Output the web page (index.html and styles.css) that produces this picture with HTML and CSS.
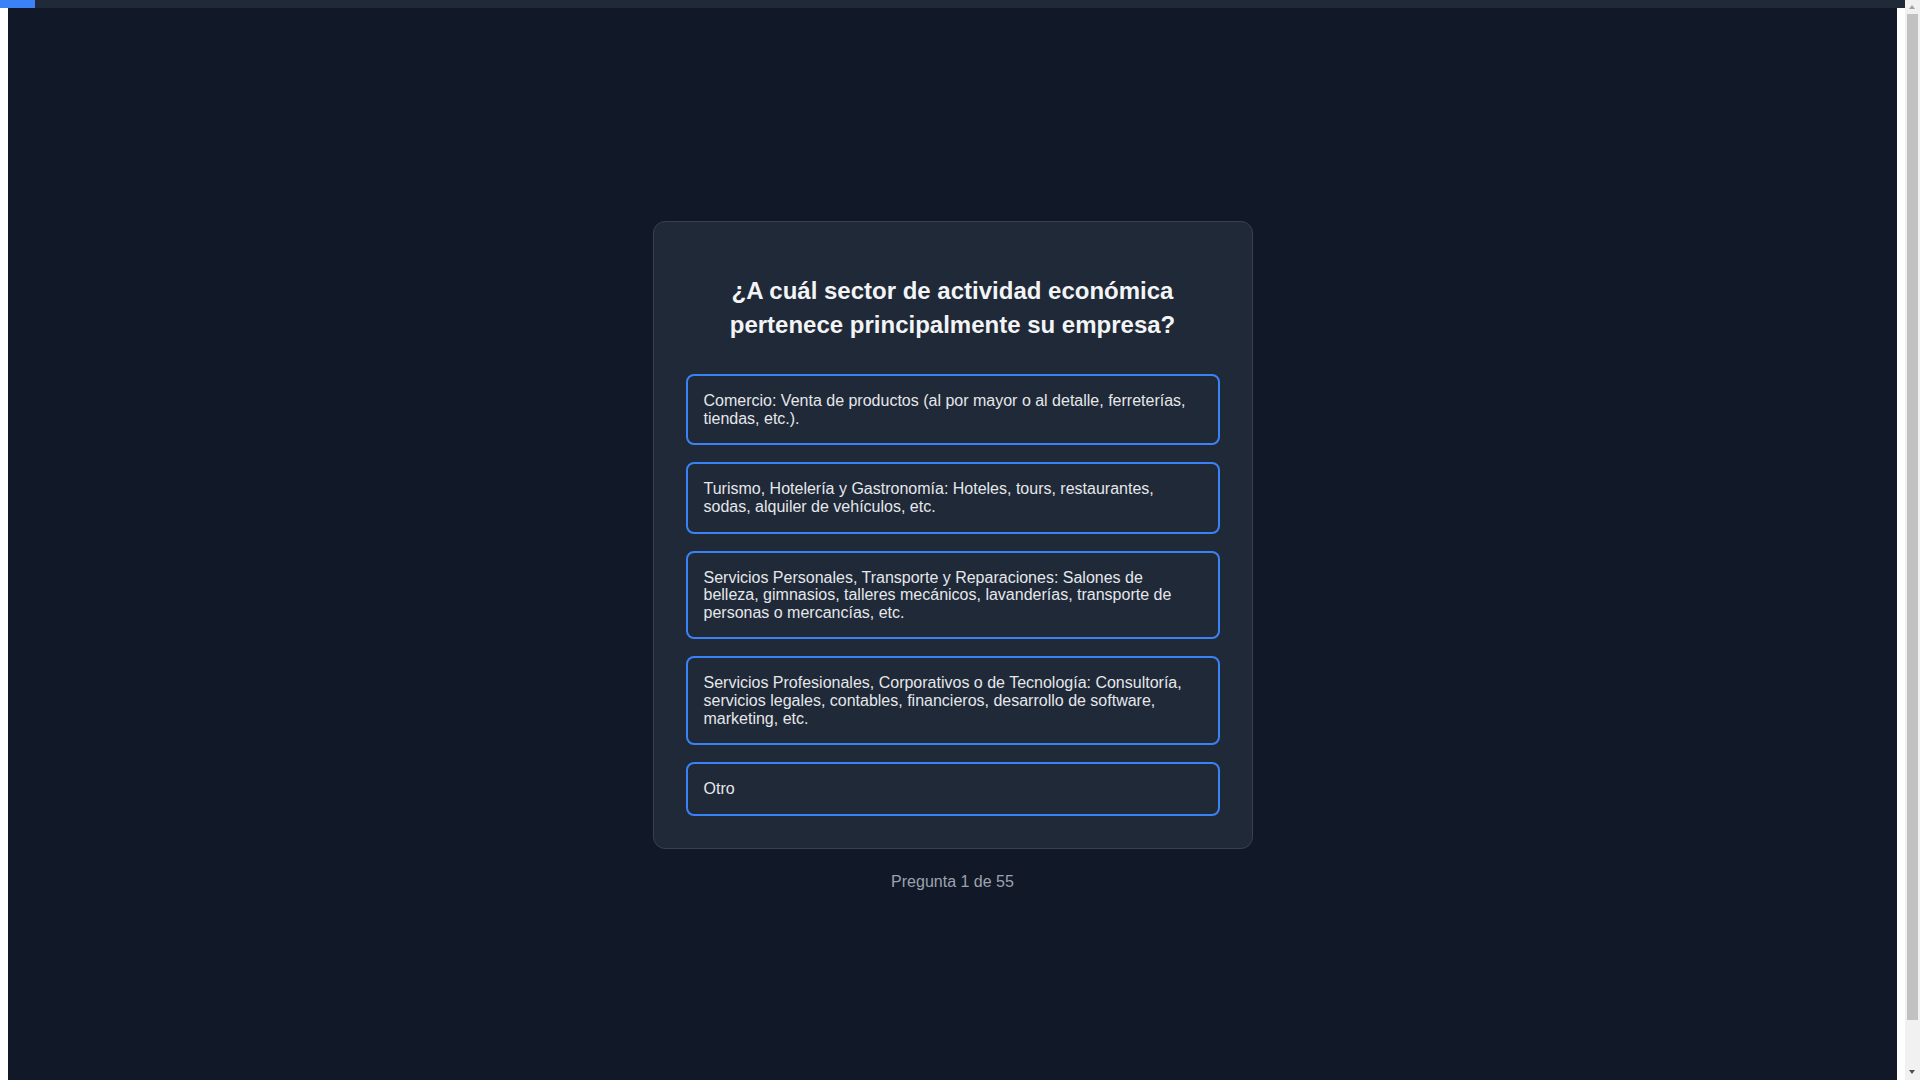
FILE: index.html
```html
<!DOCTYPE html>
<html lang="es">
<head>
<meta charset="utf-8">
<title>Encuesta</title>
<link rel="stylesheet" href="styles.css">
</head>
<body>
<div class="progress"><div class="progress-fill" style="width: 1.818%"></div></div>
<main class="page">
  <div class="quiz">
    <section class="card">
      <h2 class="question">¿A cuál sector de actividad económica pertenece principalmente su empresa?</h2>
      <div class="options">
        <button class="option">Comercio: Venta de productos (al por mayor o al detalle, ferreterías, tiendas, etc.).</button>
        <button class="option">Turismo, Hotelería y Gastronomía: Hoteles, tours, restaurantes, sodas, alquiler de vehículos, etc.</button>
        <button class="option">Servicios Personales, Transporte y Reparaciones: Salones de belleza, gimnasios, talleres mecánicos, lavanderías, transporte de personas o mercancías, etc.</button>
        <button class="option">Servicios Profesionales, Corporativos o de Tecnología: Consultoría, servicios legales, contables, financieros, desarrollo de software, marketing, etc.</button>
        <button class="option">Otro</button>
      </div>
    </section>
    <p class="counter">Pregunta 1 de 55</p>
  </div>
</main>
<div class="scrollbar" aria-hidden="true">
  <span class="scroll-arrow scroll-up"></span>
  <span class="scroll-thumb"></span>
  <span class="scroll-arrow scroll-down"></span>
</div>
</body>
</html>
```

FILE: styles.css
```css
body {
  margin: 8px 23px 8px 8px;
  font-family: "Liberation Sans", Arial, sans-serif;
}

.progress {
  position: fixed;
  top: 0;
  left: 0;
  width: calc(100% - 15px);
  height: 8px;
  background: #1f2937;
  z-index: 10;
}

.progress-fill {
  height: 100%;
  background: #3b82f6;
}

.page {
  box-sizing: border-box;
  min-height: 100vh;
  padding-top: 16px;
  background: #111827;
  display: flex;
  align-items: center;
  justify-content: center;
}

.quiz {
  width: 600px;
}

.card {
  box-sizing: border-box;
  width: 600px;
  padding: 32px;
  background: #1f2937;
  border: 1px solid #374151;
  border-radius: 12px;
}

.question {
  margin: 20px 0 32px;
  font-size: 24px;
  line-height: 34px;
  font-weight: 700;
  color: #f3f4f6;
  text-align: center;
}

.options {
  display: flex;
  flex-direction: column;
  gap: 17px;
}

.option {
  display: block;
  width: 100%;
  box-sizing: border-box;
  padding: 16px;
  background: #1f2937;
  border: 2px solid #3b82f6;
  border-radius: 8px;
  color: #e5e7eb;
  font-family: "Liberation Sans", Arial, sans-serif;
  font-size: 16px;
  line-height: 1.1;
  text-align: left;
  cursor: pointer;
}

.counter {
  margin: 24px 0 0;
  font-size: 16px;
  color: #9ca3af;
  text-align: center;
}

/* classic scrollbar drawn over the right edge of the viewport */
.scrollbar {
  position: fixed;
  top: 0;
  right: 0;
  width: 15px;
  height: 100vh;
  background: #f1f1f1;
  z-index: 20;
}

.scroll-thumb {
  position: absolute;
  top: 14px;
  bottom: 60px;
  left: 2px;
  right: 2px;
  background: #c1c1c1;
}

.scroll-arrow {
  position: absolute;
  left: 4px;
  width: 0;
  height: 0;
  border-left: 3.5px solid transparent;
  border-right: 3.5px solid transparent;
}

.scroll-up {
  top: 5px;
  border-bottom: 4px solid #a3a3a3;
}

.scroll-down {
  bottom: 6px;
  border-top: 4px solid #505050;
}
```
